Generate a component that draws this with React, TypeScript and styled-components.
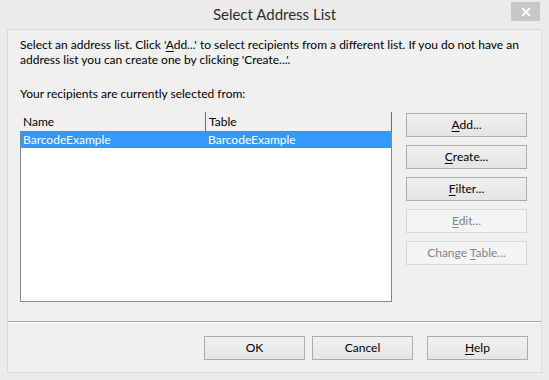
import React from 'react';
import styled, { createGlobalStyle } from 'styled-components';

const GlobalStyle = createGlobalStyle`
  html, body {
    margin: 0;
    padding: 0;
    background: #ebebeb;
  }
  body {
    font-family: Lato, 'Noto Sans', sans-serif;
    font-size: 12px;
    color: #000;
  }
`;

const Window = styled.div`
  position: relative;
  width: 549px;
  height: 380px;
  box-sizing: border-box;
  background: #ebebeb;
  display: flex;
  flex-direction: column;
  padding: 0 7px 7px 7px;
`;

const TitleBar = styled.div`
  height: 29px;
  display: flex;
  align-items: center;
  justify-content: center;
  font-size: 15px;
  color: #2b2b2b;
  padding-bottom: 1px;
  box-sizing: border-box;
`;

const CloseButton = styled.div`
  position: absolute;
  top: 2px;
  right: 9px;
  width: 29px;
  height: 19px;
  background: #c7c7c7;
  display: flex;
  align-items: center;
  justify-content: center;
`;

const Client = styled.div`
  flex: 1;
  border: 1px solid #dadada;
  background: #f0f0f0;
  display: flex;
  flex-direction: column;
`;

const Body = styled.div`
  padding: 7px 13px 0 12px;
  display: flex;
  flex-direction: column;
`;

const Intro = styled.p`
  margin: 0;
  line-height: 15px;
  white-space: nowrap;
`;

const Caption = styled.p`
  margin: 19px 0 0 0;
  line-height: 15px;
`;

const Main = styled.div`
  margin-top: 11px;
  display: flex;
  gap: 14px;
  align-items: flex-start;
`;

const ListView = styled.div`
  width: 372px;
  height: 190px;
  display: flex;
  flex-direction: column;
`;

const HeaderRow = styled.div`
  height: 19px;
  display: flex;
  border-bottom: 1px solid #7f7f7f;
`;

const HeaderCell = styled.div<{ $width: number }>`
  width: ${(p) => p.$width}px;
  box-sizing: border-box;
  padding-left: 3px;
  border-right: 1px solid #6f6f6f;
  line-height: 20px;
`;

const Rows = styled.div`
  flex: 1;
  background: #fff;
  border: 1px solid #828790;
  border-top: none;
`;

const Row = styled.div<{ $selected?: boolean }>`
  display: flex;
  height: 16px;
  line-height: 16px;
  background: ${(p) => (p.$selected ? '#3399ff' : 'transparent')};
  color: ${(p) => (p.$selected ? '#fff' : '#000')};
`;

const Cell = styled.div<{ $width: number }>`
  width: ${(p) => p.$width}px;
  padding-left: 2px;
  box-sizing: border-box;
`;

const ButtonColumn = styled.div`
  display: flex;
  flex-direction: column;
  gap: 8px;
  margin-top: 1px;
`;

const Button = styled.div<{ $disabled?: boolean; $width?: number }>`
  width: ${(p) => p.$width ?? 121}px;
  height: 24px;
  box-sizing: border-box;
  display: flex;
  align-items: center;
  justify-content: center;
  border: 1px solid ${(p) => (p.$disabled ? '#d9d9d9' : '#acacac')};
  background: ${(p) =>
    p.$disabled ? '#f4f4f4' : 'linear-gradient(#f0f0f0, #e5e5e5)'};
  color: ${(p) => (p.$disabled ? '#838383' : '#000')};
  padding-bottom: 1px;
`;

const Key = styled.span`
  text-decoration: underline;
  text-underline-offset: 2px;
`;

const Separator = styled.div`
  margin-top: 19px;
  height: 1px;
  background: #a0a0a0;
  border-bottom: 1px solid #ffffff;
`;

const Footer = styled.div`
  display: flex;
  justify-content: flex-end;
  padding: 13px 13px 0 0;
`;

const FooterButton = styled(Button)<{ $gapAfter: number }>`
  margin-right: ${(p) => p.$gapAfter}px;
`;

export default function App() {
  return (
    <>
      <GlobalStyle />
      <Window>
        <TitleBar>Select Address List</TitleBar>
        <CloseButton>
          <svg width="10" height="10" viewBox="0 0 10 10">
            <path d="M1 1 L9 9 M9 1 L1 9" stroke="#fff" strokeWidth="1.8" />
          </svg>
        </CloseButton>
        <Client>
          <Body>
            <Intro>
              Select an address list. Click '<Key>A</Key>dd...' to select recipients from a
              different list. If you do not have an
              <br />
              address list you can create one by clicking 'Create...'.
            </Intro>
            <Caption>Your recipients are currently selected from:</Caption>
            <Main>
              <ListView>
                <HeaderRow>
                  <HeaderCell $width={186}>Name</HeaderCell>
                  <HeaderCell $width={186}>Table</HeaderCell>
                </HeaderRow>
                <Rows>
                  <Row $selected>
                    <Cell $width={185}>BarcodeExample</Cell>
                    <Cell $width={185}>BarcodeExample</Cell>
                  </Row>
                </Rows>
              </ListView>
              <ButtonColumn>
                <Button>
                  <span>
                    <Key>A</Key>dd...
                  </span>
                </Button>
                <Button>
                  <span>
                    <Key>C</Key>reate...
                  </span>
                </Button>
                <Button>
                  <span>
                    <Key>F</Key>ilter...
                  </span>
                </Button>
                <Button $disabled>
                  <span>
                    <Key>E</Key>dit...
                  </span>
                </Button>
                <Button $disabled>
                  <span>
                    Change <Key>T</Key>able...
                  </span>
                </Button>
              </ButtonColumn>
            </Main>
          </Body>
          <Separator />
          <Footer>
            <FooterButton $width={101} $gapAfter={7}>
              OK
            </FooterButton>
            <FooterButton $width={101} $gapAfter={14}>
              Cancel
            </FooterButton>
            <FooterButton $width={101} $gapAfter={0}>
              <span>
                <Key>H</Key>elp
              </span>
            </FooterButton>
          </Footer>
        </Client>
      </Window>
    </>
  );
}
